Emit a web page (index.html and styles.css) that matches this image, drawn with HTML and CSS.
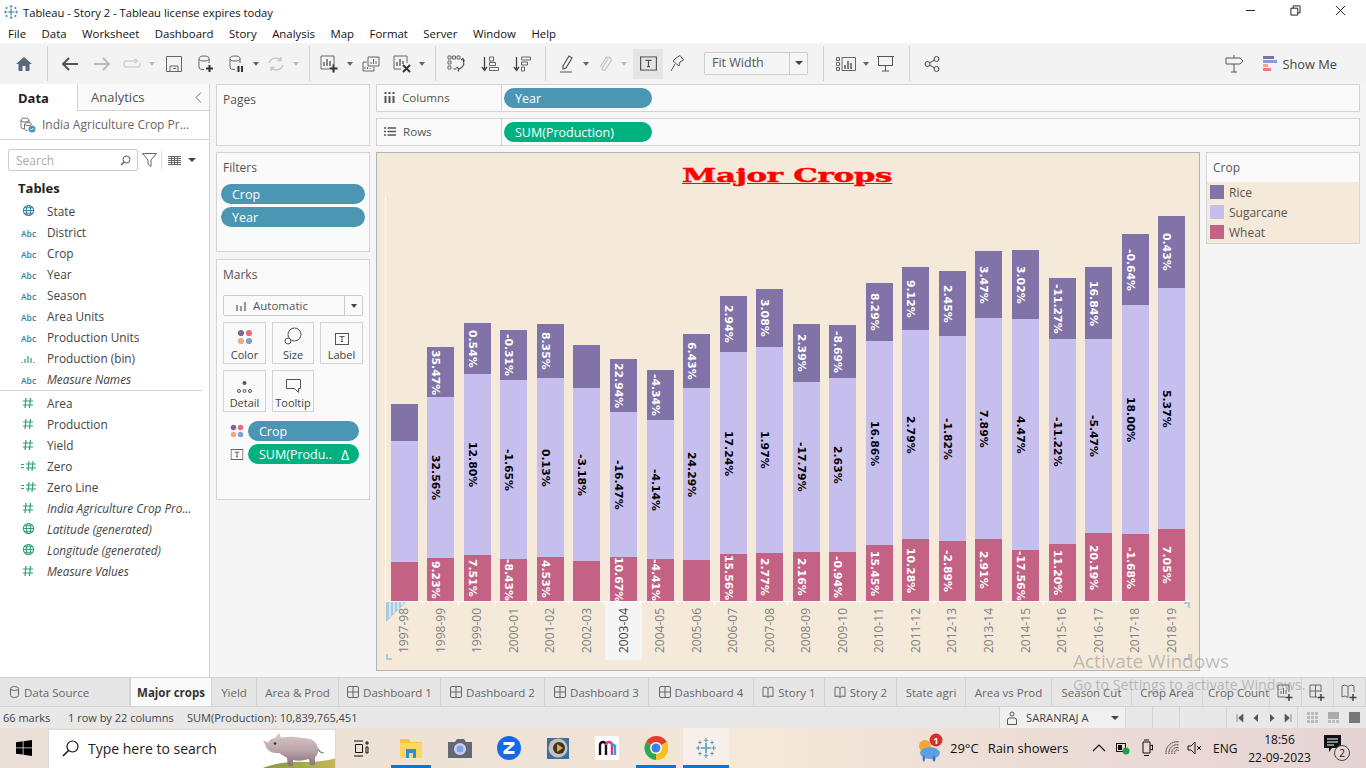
FILE: index.html
```html
<!DOCTYPE html>
<html lang="en">
<head>
<meta charset="utf-8">
<title>Tableau - Story 2</title>
<link rel="stylesheet" href="styles.css">
</head>
<body>
<svg class="defs" width="0" height="0">
  <defs>
    <symbol id="abc" viewBox="0 0 16 10"><text x="0" y="9" class="abc-t">Abc</text></symbol>
    <symbol id="hash" viewBox="0 0 12 12"><path d="M4 1 3 11M8.500 1l-1 10M1 4h10M1 8h10" fill="none" stroke="#2f9e77" stroke-width="1.200"/></symbol>
    <symbol id="eqhash" viewBox="0 0 16 12"><path d="M0 4.500h3M0 7.500h3M8 1 7 11M12 1l-1 10M5 4h10M5 8h10" fill="none" stroke="#2f9e77" stroke-width="1.100"/></symbol>
    <symbol id="globe" viewBox="0 0 14 14"><g fill="none" stroke-width="1.100"><circle cx="7" cy="7" r="5.500"/><ellipse cx="7" cy="7" rx="2.400" ry="5.500"/><path d="M1.500 7h11M2.400 4h9.200M2.400 10h9.200"/></g></symbol>
    <symbol id="dots" viewBox="0 0 16 16"><circle cx="4" cy="4" r="3.100" fill="#7e6796"/><circle cx="12" cy="4" r="3.100" fill="#ea6a7e"/><circle cx="4" cy="12" r="3.100" fill="#f2a77c"/><circle cx="12" cy="12" r="3.100" fill="#7ea3cc"/></symbol>
    <symbol id="tbox" viewBox="0 0 14 12"><rect x=".5" y=".5" width="13" height="11" fill="none" stroke="#555"/><path d="M4.500 3.500h5M7 3.500v5M5.800 8.500h2.400" fill="none" stroke="#555"/></symbol>
    <symbol id="dash" viewBox="0 0 12 12"><rect x=".5" y=".5" width="11" height="11" rx="1.500" fill="none" stroke="#666"/><path d="M6 .5v11M.5 6h11" stroke="#666"/></symbol>
    <symbol id="book" viewBox="0 0 12 12"><path d="M1 1.500 4 1l2 1.500L8 1l3 .5v9L8 10l-2 1.500L4 10l-3 .5zM6 2.500v9" fill="none" stroke="#666"/></symbol>
    <symbol id="tlogo" viewBox="0 0 20 20"><g fill="none"><path d="M10 5.500v9M5.500 10h9" stroke-width="1.500"/><path d="M10 1v4M8 3h4M10 15v4M8 17h4M1 10h4M3 8v4M15 10h4M17 8v4M4.500 3.500v3M3 5h3M15.500 3.500v3M14 5h3M4.500 13.500v3M3 15h3M15.500 13.500v3M14 15h3"/></g></symbol>
  </defs>
</svg>

<header class="titlebar">
  <svg class="app-icon" viewBox="0 0 20 20"><use href="#tlogo"/></svg>
  <span class="title-text">Tableau - Story 2 - Tableau license expires today</span>
  <div class="win-ctrls">
    <svg viewBox="0 0 12 12"><path d="M1 6h10" stroke="#111"/></svg>
    <svg viewBox="0 0 12 12"><path d="M1 3.500h7.500V11H1zM3.500 3.500V1H11v7.500H8.500" fill="none" stroke="#111"/></svg>
    <svg viewBox="0 0 12 12"><path d="m1 1 10 10M11 1 1 11" stroke="#111"/></svg>
  </div>
</header>

<nav class="menubar">
  <span>File</span><span>Data</span><span>Worksheet</span><span>Dashboard</span><span>Story</span><span>Analysis</span><span>Map</span><span>Format</span><span>Server</span><span>Window</span><span>Help</span>
</nav>

<div class="toolbar">
  <div class="tb w32"><svg width="18" height="16" viewBox="0 0 18 16"><path d="M9 1 1 8h2.500v7h4v-5h3v5h4V8H17z" fill="#566a7c"/></svg></div>
  <i class="sep"></i>
  <div class="tb w30"><svg width="18" height="14" viewBox="0 0 18 14"><path d="M17 7H2M8 1 2 7l6 6" fill="none" stroke="#555" stroke-width="2"/></svg></div>
  <div class="tb w34"><svg width="18" height="14" viewBox="0 0 18 14"><path d="M1 7h15M10 1l6 6-6 6" fill="none" stroke="#bbb" stroke-width="2"/></svg></div>
  <div class="tb w26"><svg width="18" height="12" viewBox="0 0 18 12"><path d="M12 3H3a2 2 0 0 0-2 2v2a2 2 0 0 0 2 2h12a2 2 0 0 0 2-2V5M12 1v4l3-2z" fill="none" stroke="#c4c4c4"/></svg></div>
  <div class="tb w14"><b class="caret off"></b></div>
  <div class="tb w30"><svg width="16" height="16" viewBox="0 0 16 16"><path d="M.5.500h15v15H.5zM4 15.500V10h8v5.500M7 12.500h3" fill="none" stroke="#666"/></svg></div>
  <div class="tb w34"><svg width="16" height="18" viewBox="0 0 16 18"><path d="M1 4v9q0 1.500 5 1.500M11 4v4" fill="none" stroke="#666"/><ellipse cx="6" cy="3.500" rx="5" ry="2.500" fill="none" stroke="#666"/><path d="M11.500 10v7M8 13.500h7" stroke="#333" stroke-width="2"/></svg></div>
  <div class="tb w28"><svg width="16" height="18" viewBox="0 0 16 18"><path d="M1 4v9q0 1.500 5 1.500M11 4v4" fill="none" stroke="#666"/><ellipse cx="6" cy="3.500" rx="5" ry="2.500" fill="none" stroke="#666"/><path d="M9.500 11v6M13 11v6" stroke="#333" stroke-width="2"/></svg></div>
  <div class="tb w10"><b class="caret"></b></div>
  <div class="tb w30"><svg width="18" height="16" viewBox="0 0 18 16"><path d="M2 7a7 6 0 0 1 12-3M16 9a7 6 0 0 1-12 3M14 1v3.500h-3.500M4 15v-3.500h3.500" fill="none" stroke="#c4c4c4" stroke-width="1.300"/></svg></div>
  <div class="tb w10"><b class="caret off"></b></div>
  <i class="sep s8"></i>
  <div class="tb w24"><svg width="18" height="18" viewBox="0 0 18 18"><path d="M14 10V1H1v13h8" fill="none" stroke="#666"/><path d="M4 11V7M7 11V4M10 11V6" stroke="#666" stroke-width="1.500"/><path d="M13.500 9.500v8M9.500 13.500h8" stroke="#333" stroke-width="2"/></svg></div>
  <div class="tb w18"><b class="caret"></b></div>
  <div class="tb w24"><svg width="18" height="16" viewBox="0 0 18 16"><path d="M6 10V1h11v9H6zM5 6H1v9h11v-4" fill="none" stroke="#666"/><path d="M9 8V6M11.500 8V3M14 8V5M3 13v-2M5.500 13v-2M8 13v-1" stroke="#666"/></svg></div>
  <div class="tb w34 nudge"><svg width="18" height="18" viewBox="0 0 18 18"><path d="M14 8V1H1v13h7" fill="none" stroke="#666"/><path d="M4 11V7M7 11V4M10 9V6" stroke="#666" stroke-width="1.500"/><path d="m10 10 7 7M17 10l-7 7" stroke="#333" stroke-width="2"/></svg></div>
  <div class="tb w10"><b class="caret"></b></div>
  <i class="sep s8"></i>
  <div class="tb w26"><svg width="19" height="17" viewBox="0 0 19 17"><path d="M1 1h3v3H1zM5.500 1h3v3h-3zM10 1h3v3h-3zM1 6h3v3H1zM1 11h3v3H1z" fill="none" stroke="#666"/><path d="M16 5c2 3 1 7-4 9M9.500 12l2.500 2-1 2.500M6.500 14h3M14 5l2-1.500 1.500 2.500" fill="none" stroke="#444" stroke-width="1.100"/></svg></div>
  <div class="tb w42"><svg width="18" height="16" viewBox="0 0 18 16"><path d="M3.500 1v13M1 11l2.500 3.500L6 11" fill="none" stroke="#444" stroke-width="1.300"/><path d="M8.500 1h4v4h-4zM8.500 6.500h6v3h-6zM8.500 11.500h9v3h-9z" fill="none" stroke="#666"/></svg></div>
  <div class="tb w22"><svg width="18" height="16" viewBox="0 0 18 16"><path d="M3.500 1v13M1 11l2.500 3.500L6 11" fill="none" stroke="#444" stroke-width="1.300"/><path d="M8.500 1h9v3h-9zM8.500 6h6v3h-6zM8.500 11h3v4h-3z" fill="none" stroke="#666"/></svg></div>
  <div class="tb-gap g5"></div>
  <i class="sep"></i>
  <div class="tb w28"><svg width="14" height="18" viewBox="0 0 14 18"><path d="M3 11 9 1l3 2-6 10-3 1zM0 17h12" fill="none" stroke="#555" stroke-width="1.200"/></svg></div>
  <div class="tb w10"><b class="caret"></b></div>
  <div class="tb w28"><svg width="14" height="18" viewBox="0 0 14 18"><path d="M10 4 4 13a2 2 0 0 0 3 2l6-9a3 3 0 0 0-5-3L2 12" fill="none" stroke="#c4c4c4" stroke-width="1.200"/></svg></div>
  <div class="tb w10"><b class="caret off"></b></div>
  <div class="tb-gap g4"></div>
  <div class="tb w30 tb-on"><svg width="17" height="15" viewBox="0 0 14 12"><use href="#tbox"/></svg></div>
  <div class="tb w28"><svg width="14" height="17" viewBox="0 0 14 17"><path d="M6 3 10 .5 13.500 5 10 7l-1 4-6-5zM5 9l-4 7" fill="none" stroke="#555"/></svg></div>
  <div class="tb-gap g13"></div>
  <div class="fit"><span class="fit-text">Fit Width</span><span class="fit-btn"><b class="caret"></b></span></div>
  <div class="tb-gap g8"></div>
  <i class="sep"></i>
  <div class="tb w30"><svg width="20" height="14" viewBox="0 0 20 14"><path d="M.5.500h3v3h-3zM.5 5.500h3v3h-3zM.5 10.500h3v3h-3zM6 .5h13.500v13H6z" fill="none" stroke="#666"/><path d="M9 12V8M12 12V4M15 12V6" stroke="#555" stroke-width="1.500"/></svg></div>
  <div class="tb w10"><b class="caret"></b></div>
  <div class="tb w28"><svg width="17" height="17" viewBox="0 0 17 17"><path d="M0 1.500h17M1.500 1.500v9h14v-9M8.500 10.500V16M5 16h7" fill="none" stroke="#555"/></svg></div>
  <div class="tb-gap g3"></div>
  <i class="sep"></i>
  <div class="tb w30"><svg width="16" height="16" viewBox="0 0 16 16"><g fill="none" stroke="#444"><circle cx="3.500" cy="8" r="2.500"/><circle cx="12.500" cy="3" r="2.500"/><circle cx="12.500" cy="13" r="2.500"/><path d="m5.700 6.800 4.600-2.600M5.700 9.200l4.600 2.600"/></g></svg></div>
  <div class="tb-right">
    <svg width="19" height="18" viewBox="0 0 19 18"><path d="M1 3h14l3 3-3 3H1zM9 0v3M9 9v8M6 17h6" fill="none" stroke="#555"/></svg>
    <span class="showme">
      <svg width="14" height="15" viewBox="0 0 14 15"><path fill="#84719f" d="M0 0h11v3H0z"/><path fill="#7ea3cc" d="M0 4h14v3H0z"/><path fill="#f2a77c" d="M0 8h5v3H0z"/><path fill="#ee7a86" d="M0 12h8v3H0z"/></svg>
      Show Me
    </span>
  </div>
</div>

<main class="workspace">
  <aside class="datapane">
    <div class="pane-tabs">
      <div class="pane-tab active">Data</div>
      <div class="pane-tab">Analytics<svg class="collapse" width="7" height="11" viewBox="0 0 7 11"><path d="M6 .5 1 5.500l5 5" fill="none" stroke="#666"/></svg></div>
    </div>
    <div class="source">
      <svg width="16" height="16" viewBox="0 0 16 16"><g fill="none" stroke="#777"><ellipse cx="5" cy="3" rx="4" ry="2"/><path d="M1 3v7q0 2 4 2M9 3v2"/><ellipse cx="8" cy="7" rx="3.500" ry="1.500"/><path d="M4.500 7v5q1 1.500 3 1.500"/></g><circle cx="12" cy="12" r="3.500" fill="#4b94b4"/><path d="m10.500 12 1 1 2-2" stroke="#fff" fill="none"/></svg>
      <span>India Agriculture Crop Pr...</span>
    </div>
    <div class="search-row">
      <div class="search"><span>Search</span><svg width="11" height="11" viewBox="0 0 11 11"><circle cx="6.500" cy="4.500" r="3.500" fill="none" stroke="#555"/><path d="M4 7 1 10" stroke="#555" stroke-width="1.300"/></svg></div>
      <svg class="funnel" width="15" height="14" viewBox="0 0 15 14"><path d="M.5.500h14L9 7v6.500L6 11V7z" fill="none" stroke="#666"/></svg>
      <i class="mini-sep"></i>
      <svg width="13" height="9" viewBox="0 0 13 9"><path d="M0 .5h13M0 2.500h13M0 4.500h13M0 6.500h13M0 8.500h13M3.500 0v9M6.500 0v9M9.500 0v9" stroke="#666"/></svg>
      <b class="caret dark"></b>
    </div>
    <h2 class="tables">Tables</h2>
    <ul class="fields">
      <li><svg class="fi globe-i" viewBox="0 0 14 14"><use href="#globe"/></svg>State</li>
      <li><svg class="fi abc-i" viewBox="0 0 16 10"><use href="#abc"/></svg>District</li>
      <li><svg class="fi abc-i" viewBox="0 0 16 10"><use href="#abc"/></svg>Crop</li>
      <li><svg class="fi abc-i" viewBox="0 0 16 10"><use href="#abc"/></svg>Year</li>
      <li><svg class="fi abc-i" viewBox="0 0 16 10"><use href="#abc"/></svg>Season</li>
      <li><svg class="fi abc-i" viewBox="0 0 16 10"><use href="#abc"/></svg>Area Units</li>
      <li><svg class="fi abc-i" viewBox="0 0 16 10"><use href="#abc"/></svg>Production Units</li>
      <li><svg class="fi abc-i" viewBox="0 0 16 10"><path d="M1 9V8M4 9V5M7 9V2M10 9V4M13 9V8" stroke="#2f9e77" stroke-width="1.200"/></svg>Production (bin)</li>
      <li class="em"><svg class="fi abc-i" viewBox="0 0 16 10"><use href="#abc"/></svg>Measure Names</li>
    </ul>
    <ul class="fields measures">
      <li><svg class="fi hash-i" viewBox="0 0 12 12"><use href="#hash"/></svg>Area</li>
      <li><svg class="fi hash-i" viewBox="0 0 12 12"><use href="#hash"/></svg>Production</li>
      <li><svg class="fi hash-i" viewBox="0 0 12 12"><use href="#hash"/></svg>Yield</li>
      <li><svg class="fi eq-i" viewBox="0 0 16 12"><use href="#eqhash"/></svg>Zero</li>
      <li><svg class="fi eq-i" viewBox="0 0 16 12"><use href="#eqhash"/></svg>Zero Line</li>
      <li class="em"><svg class="fi hash-i" viewBox="0 0 12 12"><use href="#hash"/></svg>India Agriculture Crop Pro...</li>
      <li class="em"><svg class="fi globe-g" viewBox="0 0 14 14"><use href="#globe"/></svg>Latitude (generated)</li>
      <li class="em"><svg class="fi globe-g" viewBox="0 0 14 14"><use href="#globe"/></svg>Longitude (generated)</li>
      <li class="em"><svg class="fi hash-i" viewBox="0 0 12 12"><use href="#hash"/></svg>Measure Values</li>
    </ul>
  </aside>

  <section class="cards">
    <div class="card pages"><h3>Pages</h3></div>
    <div class="card filters">
      <h3>Filters</h3>
      <div class="pill blue wide">Crop</div>
      <div class="pill blue wide">Year</div>
    </div>
    <div class="card marks">
      <h3>Marks</h3>
      <div class="mark-type">
        <svg width="11" height="10" viewBox="0 0 11 10"><path d="M1 10V4M5 10V5M9 10V1" stroke="#999" stroke-width="2.200"/></svg>
        <span>Automatic</span>
        <span class="mt-btn"><b class="caret"></b></span>
      </div>
      <div class="mark-grid">
        <div class="mbtn"><svg width="16" height="16" viewBox="0 0 16 16"><use href="#dots"/></svg>Color</div>
        <div class="mbtn"><svg width="18" height="18" viewBox="0 0 18 18"><g fill="none" stroke="#555"><circle cx="10.500" cy="7.500" r="6.500"/><circle cx="4" cy="14" r="3" fill="#fafafa"/></g></svg>Size</div>
        <div class="mbtn"><svg width="14" height="12" viewBox="0 0 14 12"><use href="#tbox"/></svg>Label</div>
        <div class="mbtn"><svg width="15" height="12" viewBox="0 0 15 12"><circle cx="7.500" cy="2" r="2" fill="#555"/><g fill="none" stroke="#555"><circle cx="2" cy="10" r="1.500"/><circle cx="7.500" cy="10" r="1.500"/><circle cx="13" cy="10" r="1.500"/></g></svg>Detail</div>
        <div class="mbtn"><svg width="15" height="14" viewBox="0 0 15 14"><path d="M.5.500h14v9h-2v4l-4-4h-8z" fill="none" stroke="#555"/></svg>Tooltip</div>
      </div>
      <div class="mark-field"><svg width="14" height="14" viewBox="0 0 16 16"><use href="#dots"/></svg><div class="pill blue">Crop</div></div>
      <div class="mark-field"><svg width="13" height="11" viewBox="0 0 14 12"><use href="#tbox"/></svg><div class="pill green delta">SUM(Produ..<span>Δ</span></div></div>
    </div>
  </section>

  <section class="viewarea">
    <div class="shelf">
      <div class="shelf-name"><svg width="11" height="11" viewBox="0 0 11 11"><path d="M1.500 4v7M5.500 4v7M9.500 4v7M1.500 0v2M5.500 0v2M9.500 0v2" stroke="#555" stroke-width="2"/></svg>Columns</div>
      <div class="pill blue shelf-pill">Year</div>
    </div>
    <div class="shelf">
      <div class="shelf-name"><svg width="12" height="9" viewBox="0 0 12 9"><path d="M0 1h2M3.500 1H12M0 4.500h2M3.500 4.500H12M0 8h2M3.500 8H12" stroke="#555" stroke-width="1.500"/></svg>Rows</div>
      <div class="pill green shelf-pill">SUM(Production)</div>
    </div>
    <div class="canvas">
      <div class="chart">
        <div class="chart-title"><span>Major Crops</span></div>
        <div class="plot">
          <div class="bar"><div class="seg rice" style="height:37px"></div><div class="seg sugar" style="height:121px"></div><div class="seg wheat" style="height:39px"></div></div>
          <div class="bar"><div class="seg rice" style="height:50px"><span>35.47%</span></div><div class="seg sugar" style="height:161px"><span>32.56%</span></div><div class="seg wheat" style="height:43px"><span>9.23%</span></div></div>
          <div class="bar"><div class="seg rice" style="height:51px"><span>0.54%</span></div><div class="seg sugar" style="height:181px"><span>12.80%</span></div><div class="seg wheat" style="height:46px"><span>7.51%</span></div></div>
          <div class="bar"><div class="seg rice" style="height:50px"><span>-0.31%</span></div><div class="seg sugar" style="height:179px"><span>-1.65%</span></div><div class="seg wheat" style="height:42px"><span>-8.43%</span></div></div>
          <div class="bar"><div class="seg rice" style="height:54px"><span>8.35%</span></div><div class="seg sugar" style="height:179px"><span>0.13%</span></div><div class="seg wheat" style="height:44px"><span>4.53%</span></div></div>
          <div class="bar"><div class="seg rice" style="height:43px"></div><div class="seg sugar" style="height:173px"><span>-3.18%</span></div><div class="seg wheat" style="height:40px"></div></div>
          <div class="bar"><div class="seg rice" style="height:53px"><span>22.94%</span></div><div class="seg sugar" style="height:145px"><span>-16.47%</span></div><div class="seg wheat" style="height:44px"><span>10.67%</span></div></div>
          <div class="bar"><div class="seg rice" style="height:50px"><span>-4.34%</span></div><div class="seg sugar" style="height:139px"><span>-4.14%</span></div><div class="seg wheat" style="height:42px"><span>-4.41%</span></div></div>
          <div class="bar"><div class="seg rice" style="height:54px"><span>6.43%</span></div><div class="seg sugar" style="height:172px"><span>24.29%</span></div><div class="seg wheat" style="height:41px"></div></div>
          <div class="bar"><div class="seg rice" style="height:56px"><span>2.94%</span></div><div class="seg sugar" style="height:202px"><span>17.24%</span></div><div class="seg wheat" style="height:47px"><span>15.56%</span></div></div>
          <div class="bar"><div class="seg rice" style="height:58px"><span>3.08%</span></div><div class="seg sugar" style="height:206px"><span>1.97%</span></div><div class="seg wheat" style="height:48px"><span>2.77%</span></div></div>
          <div class="bar"><div class="seg rice" style="height:58px"><span>2.39%</span></div><div class="seg sugar" style="height:170px"><span>-17.79%</span></div><div class="seg wheat" style="height:49px"><span>2.16%</span></div></div>
          <div class="bar"><div class="seg rice" style="height:53px"><span>-8.69%</span></div><div class="seg sugar" style="height:174px"><span>2.63%</span></div><div class="seg wheat" style="height:49px"><span>-0.94%</span></div></div>
          <div class="bar"><div class="seg rice" style="height:58px"><span>8.29%</span></div><div class="seg sugar" style="height:204px"><span>16.86%</span></div><div class="seg wheat" style="height:56px"><span>15.45%</span></div></div>
          <div class="bar"><div class="seg rice" style="height:63px"><span>9.12%</span></div><div class="seg sugar" style="height:209px"><span>2.79%</span></div><div class="seg wheat" style="height:62px"><span>10.28%</span></div></div>
          <div class="bar"><div class="seg rice" style="height:65px"><span>2.45%</span></div><div class="seg sugar" style="height:205px"><span>-1.82%</span></div><div class="seg wheat" style="height:60px"><span>-2.89%</span></div></div>
          <div class="bar"><div class="seg rice" style="height:67px"><span>3.47%</span></div><div class="seg sugar" style="height:221px"><span>7.89%</span></div><div class="seg wheat" style="height:62px"><span>2.91%</span></div></div>
          <div class="bar"><div class="seg rice" style="height:69px"><span>3.02%</span></div><div class="seg sugar" style="height:231px"><span>4.47%</span></div><div class="seg wheat" style="height:51px"><span>-17.56%</span></div></div>
          <div class="bar"><div class="seg rice" style="height:61px"><span>-11.27%</span></div><div class="seg sugar" style="height:205px"><span>-11.22%</span></div><div class="seg wheat" style="height:57px"><span>11.20%</span></div></div>
          <div class="bar"><div class="seg rice" style="height:72px"><span>16.84%</span></div><div class="seg sugar" style="height:194px"><span>-5.47%</span></div><div class="seg wheat" style="height:68px"><span>20.19%</span></div></div>
          <div class="bar"><div class="seg rice" style="height:71px"><span>-0.64%</span></div><div class="seg sugar" style="height:229px"><span>18.00%</span></div><div class="seg wheat" style="height:67px"><span>-1.68%</span></div></div>
          <div class="bar"><div class="seg rice" style="height:72px"><span>0.43%</span></div><div class="seg sugar" style="height:241px"><span>5.37%</span></div><div class="seg wheat" style="height:72px"><span>7.05%</span></div></div>
        </div>
        <div class="axis">
          <div class="tick"><span>1997-98</span></div><div class="tick"><span>1998-99</span></div><div class="tick"><span>1999-00</span></div><div class="tick"><span>2000-01</span></div><div class="tick"><span>2001-02</span></div><div class="tick"><span>2002-03</span></div><div class="tick hot"><span>2003-04</span></div><div class="tick"><span>2004-05</span></div><div class="tick"><span>2005-06</span></div><div class="tick"><span>2006-07</span></div><div class="tick"><span>2007-08</span></div><div class="tick"><span>2008-09</span></div><div class="tick"><span>2009-10</span></div><div class="tick"><span>2010-11</span></div><div class="tick"><span>2011-12</span></div><div class="tick"><span>2012-13</span></div><div class="tick"><span>2013-14</span></div><div class="tick"><span>2014-15</span></div><div class="tick"><span>2015-16</span></div><div class="tick"><span>2016-17</span></div><div class="tick"><span>2017-18</span></div><div class="tick"><span>2018-19</span></div>
          <svg class="hatch" width="20" height="20" viewBox="0 0 20 20"><path d="M0 0h20L0 20z" fill="#a9cbe2"/><path d="M4 0v15M8 0v11M12 0v7M16 0v3" stroke="#fff"/></svg>
          <i class="corner c-bl"></i><i class="corner c-tr"></i><i class="corner c-br"></i>
        </div>
      </div>
      <div class="legend">
        <div class="legend-head">Crop</div>
        <div class="legend-body">
          <div class="lg-row"><i class="sw rice"></i>Rice</div>
          <div class="lg-row"><i class="sw sugar"></i>Sugarcane</div>
          <div class="lg-row"><i class="sw wheat"></i>Wheat</div>
        </div>
      </div>
    </div>
  </section>
</main>

<div class="tabs">
  <div class="tab first"><svg width="9" height="12" viewBox="0 0 9 12"><path d="M.5 2.500v7q0 2 4 2t4-2v-7M.5 2.500q0-2 4-2t4 2-4 2-4-2z" fill="none" stroke="#666"/></svg>Data Source</div>
  <div class="tab active">Major crops</div>
  <div class="tab">Yield</div>
  <div class="tab">Area &amp; Prod</div>
  <div class="tab"><svg width="12" height="12" viewBox="0 0 12 12"><use href="#dash"/></svg>Dashboard 1</div>
  <div class="tab"><svg width="12" height="12" viewBox="0 0 12 12"><use href="#dash"/></svg>Dashboard 2</div>
  <div class="tab"><svg width="12" height="12" viewBox="0 0 12 12"><use href="#dash"/></svg>Dashboard 3</div>
  <div class="tab"><svg width="12" height="12" viewBox="0 0 12 12"><use href="#dash"/></svg>Dashboard 4</div>
  <div class="tab"><svg width="12" height="12" viewBox="0 0 12 12"><use href="#book"/></svg>Story 1</div>
  <div class="tab"><svg width="12" height="12" viewBox="0 0 12 12"><use href="#book"/></svg>Story 2</div>
  <div class="tab">State agri</div>
  <div class="tab">Area vs Prod</div>
  <div class="tab">Season Cut</div>
  <div class="tab">Crop Area</div>
  <div class="tab clip">Crop Count</div>
  <div class="tab add"><svg width="17" height="17" viewBox="0 0 17 17"><path d="M12 8V1H1v12h7M4 10V7M6.500 10V4M9 10V6" fill="none" stroke="#666"/><path d="M12 10v7M8.500 13.500h7" stroke="#444" stroke-width="1.500"/></svg></div>
  <div class="tab add"><svg width="17" height="17" viewBox="0 0 17 17"><path d="M12 8V1H1v12h7M6.500 1v12M1 7h11" fill="none" stroke="#666"/><path d="M12 10v7M8.500 13.500h7" stroke="#444" stroke-width="1.500"/></svg></div>
  <div class="tab add"><svg width="17" height="17" viewBox="0 0 17 17"><path d="M1 2 4 1l3 1.500L10 1l3 1v6M1 2v11l3-1 3 1.500M7 2.500v11" fill="none" stroke="#666"/><path d="M12 10v7M8.500 13.500h7" stroke="#444" stroke-width="1.500"/></svg></div>
</div>

<div class="status">
  <span class="st1">66 marks</span><span class="st2">1 row by 22 columns</span><span>SUM(Production): 10,839,765,451</span>
  <div class="st-right">
    <div class="st-user">
      <svg width="10" height="14" viewBox="0 0 10 14"><circle cx="5" cy="3" r="2" fill="none" stroke="#555"/><path d="M.5 13.500V9q0-2 2-2h5q2 0 2 2v4.500z" fill="none" stroke="#555"/></svg>
      <span>SARANRAJ A</span><b class="caret dark"></b>
    </div>
    <i class="st-cell"></i><i class="st-cell"></i><i class="st-cell st-wide"></i>
    <div class="st-nav">
      <svg width="8" height="8" viewBox="0 0 8 8"><path d="M1 0v8M7 0v8L2.500 4z" fill="#555" stroke="#555" stroke-width=".6"/></svg>
      <svg width="8" height="8" viewBox="0 0 8 8"><path d="M6 0v8L1.500 4z" fill="#555"/></svg>
      <svg width="8" height="8" viewBox="0 0 8 8"><path d="M2 0v8l4.500-4z" fill="#555"/></svg>
      <svg width="8" height="8" viewBox="0 0 8 8"><path d="M7 0v8M1 0v8l4.500-4z" fill="#555" stroke="#555" stroke-width=".6"/></svg>
    </div>
    <div class="st-view">
      <svg width="11" height="11" viewBox="0 0 11 11"><path d="M0 0h3v3H0zM4 0h3v3H4zM8 0h3v3H8zM0 4h3v3H0zM4 4h3v3H4zM8 4h3v3H8zM0 8h3v3H0zM4 8h3v3H4zM8 8h3v3H8z" fill="#bbb"/></svg>
      <svg width="11" height="11" viewBox="0 0 11 11"><path d="M0 0h11v7H0z" fill="#aaa"/><path d="M0 8h3v3H0zM4 8h3v3H4zM8 8h3v3H8z" fill="#bbb"/></svg>
      <svg width="11" height="11" viewBox="0 0 11 11"><path d="M0 0h11v11H0z" fill="#777"/></svg>
    </div>
  </div>
</div>

<footer class="taskbar">
  <svg class="winlogo" width="16" height="16" viewBox="0 0 16 16"><path d="M0 2.300 6.700 1.300v6.200H0zM7.500 1.200 16 0v7.500H7.500zM0 8.300h6.700v6.300L0 13.700zM7.500 8.300H16V16l-8.500-1.200z" fill="#000"/></svg>
  <div class="tsearch">
    <svg width="17" height="17" viewBox="0 0 17 17"><circle cx="10.500" cy="6.500" r="5.500" fill="none" stroke="#111" stroke-width="1.200"/><path d="M6.500 10.500 1 16" stroke="#111" stroke-width="1.400"/></svg>
    <span>Type here to search</span>
    <svg class="rhino" width="85" height="40" viewBox="0 0 85 40">
      <defs>
        <linearGradient id="rh" x1="0" y1="0" x2="0" y2="1"><stop offset="0" stop-color="#dcc8c6"/><stop offset=".55" stop-color="#b9a3a8"/><stop offset="1" stop-color="#85707a"/></linearGradient>
        <linearGradient id="hill" x1="0" y1="0" x2="1" y2="0"><stop offset="0" stop-color="#7e9c3e"/><stop offset=".6" stop-color="#a5ae4c"/><stop offset="1" stop-color="#c9b45c"/></linearGradient>
      </defs>
      <path d="M5 40Q28 31 52 33 68 33 82 29V40z" fill="url(#hill)"/>
      <path d="M8 11 13 13.500 16 10 20 9 24 4 26 8.500Q38 7 47 9 62 9 63 20 63.500 26 60 28V36H55L54 30Q45 33 38 31V37H33L32 29 24 24Q18 24 16 23L12 20z" fill="url(#rh)"/>
      <path d="M63 20Q65 24 69 24" fill="none" stroke="#85707a" stroke-width="1.200"/>
      <circle cx="20" cy="14.500" r="1.200" fill="#2b2b2b"/>
    </svg>
  </div>
  <svg class="ti taskview" width="16" height="17" viewBox="0 0 16 17"><path d="M1 1h9M1 16h9M2.500 4.500h7v8h-7zM13 2h2v2h-2zM13 7h2v6h-2z" fill="none" stroke="#111"/></svg>
  <div class="ticon run"><svg width="22" height="20" viewBox="0 0 22 20"><path d="M0 1h9l2 3h11v16H0z" fill="#f6c445"/><path d="M0 5h22v15H0z" fill="#fbd863"/><path d="M6 11h10v9H6z" fill="#2e8fd8"/><path d="M9 15h4v5H9z" fill="#fbd863"/></svg></div>
  <div class="ticon"><svg width="24" height="20" viewBox="0 0 24 20"><path d="M0 4h7l2-3h7l2 3h6v16H0z" fill="#5f6a73"/><circle cx="12" cy="11" r="6" fill="#d8c6ee"/><circle cx="12" cy="11" r="3.500" fill="#7da5e8"/></svg></div>
  <div class="ticon"><svg width="24" height="24" viewBox="0 0 24 24"><circle cx="12" cy="12" r="12" fill="#1768e4"/><path d="M6.500 6h11v3l-7 6h7v3h-11v-3l7-6h-7z" fill="#fff"/></svg></div>
  <div class="ticon"><svg width="24" height="26" viewBox="0 0 24 26"><rect x="1" y="3" width="22" height="21" fill="#3a6ea5"/><circle cx="12" cy="13" r="9.500" fill="#c9c1b4"/><circle cx="13" cy="13" r="6" fill="#3d3328"/><path d="M11 9l6 4-6 4z" fill="#e9a93a"/></svg></div>
  <div class="ticon"><svg width="24" height="24" viewBox="0 0 24 24"><rect width="24" height="24" fill="#fff"/><path d="M5 19V9a3 3 0 0 1 6 0v10" fill="none" stroke="#111" stroke-width="2.400"/><path d="M11 9a3 3 0 0 1 6 0v10" fill="none" stroke="#e0338a" stroke-width="2.400"/><path d="M17 9a2 2 0 0 1 3 1v9" fill="none" stroke="#2aa7d9" stroke-width="2.400"/></svg></div>
  <div class="ticon run"><svg width="24" height="24" viewBox="0 0 24 24"><path d="M12 12 2 6a12 12 0 0 1 20.800 0z" fill="#e33b2e"/><path d="M12 12 22.800 6A12 12 0 0 1 12 24z" fill="#f7c11c"/><path d="M12 12 12 24A12 12 0 0 1 2 6z" fill="#2fa84f"/><circle cx="12" cy="12" r="6" fill="#fff"/><circle cx="12" cy="12" r="4.500" fill="#3b82e8"/></svg></div>
  <div class="ticon act"><svg class="tlogo-big" width="22" height="22" viewBox="0 0 20 20"><use href="#tlogo"/></svg></div>
  <div class="tray">
    <span class="weather">
      <svg width="25" height="30" viewBox="0 0 25 30"><circle cx="7" cy="13" r="6" fill="#f4a52c"/><ellipse cx="12" cy="20" rx="10" ry="6" fill="#5f9fe0"/><path d="M6 22q2 4 0 7-3-3 0-7zM16 22q3 4 0 7-3-3 0-7z" fill="#2f78c9"/><circle cx="18" cy="7" r="6.500" fill="#d3322b"/><text x="18" y="10.500" class="badge1">1</text></svg>
      <span class="temp">29°C</span><span>Rain showers</span>
    </span>
    <svg class="chev" width="14" height="8" viewBox="0 0 14 8"><path d="m1 7 6-6 6 6" fill="none" stroke="#111" stroke-width="1.200"/></svg>
    <svg width="14" height="14" viewBox="0 0 14 14"><rect x=".5" y="2.500" width="9" height="8" fill="none" stroke="#111"/><rect x="2" y="4" width="4" height="5" fill="#111"/><circle cx="10" cy="10" r="3.500" fill="#1e9e4a"/></svg>
    <svg width="11" height="18" viewBox="0 0 11 18"><path d="M1 3h7v11H1zM8 7l2.500-1v5L8 10M2 1h5M2 16.500h5" fill="none" stroke="#111"/></svg>
    <svg class="wifi" width="15" height="14" viewBox="0 0 15 14"><path d="M1 13a11 11 0 0 1 13-12M4 13a8 8 0 0 1 10-9M7 13a5 5 0 0 1 7-6M10 13a2.500 2.500 0 0 1 4-3" fill="none" stroke="#222" stroke-dasharray="1.500 .7"/></svg>
    <svg class="vol" width="15" height="14" viewBox="0 0 15 14"><path d="M1 5h3l4-4v12l-4-4H1zM10 5l4 4M14 5l-4 4" fill="none" stroke="#111"/></svg>
    <span class="lang">ENG</span>
    <span class="clock"><span>18:56</span><span>22-09-2023</span></span>
    <span class="notif">
      <svg width="17" height="17" viewBox="0 0 17 17"><path d="M0 0h17v13H8l-3 4v-4H0z" fill="#111"/><path d="M3 4h11M3 7h11M3 10h7" stroke="#fff"/></svg>
      <span class="nbadge">2</span>
    </span>
  </div>
</footer>

<div class="activate">
  <div class="a1">Activate Windows</div>
  <div class="a2">Go to Settings to activate Windows.</div>
</div>
</body>
</html>
```

FILE: styles.css
```css
* { box-sizing: border-box; }
html, body { margin: 0; padding: 0; }
body {
  width: 1366px; height: 768px; overflow: hidden; position: relative;
  font-family: "Open Sans", "Noto Sans", "Liberation Sans", sans-serif;
  font-size: 12px; color: #444; background: #f5f5f5;
  display: flex; flex-direction: column;
}
.defs { position: absolute; }
.abc-t { font: 600 8.500px "Open Sans", sans-serif; fill: #2f7f9f; }
ul { list-style: none; margin: 0; padding: 0; }
h2, h3 { margin: 0; font-weight: 400; }

/* title + menu */
.titlebar { height: 24px; background: #fff; display: flex; align-items: center; padding-left: 3px; flex: none; }
.app-icon { width: 16px; height: 16px; stroke: #3c7fa3; }
.title-text { margin-left: 4px; color: #111; font-size: 11.200px; }
.win-ctrls { margin-left: auto; display: flex; height: 20px; align-self: flex-start; align-items: center; padding-right: 20px; gap: 34px; }
.win-ctrls svg { width: 11px; height: 11px; }
.menubar { height: 19px; background: #fff; display: flex; align-items: center; gap: 15.500px; padding-left: 8px; color: #111; font-size: 11.400px; flex: none; }

/* toolbar */
.toolbar { height: 41px; background: #f3f3f3; display: flex; align-items: center; padding-left: 8px; flex: none; }
.tb { height: 30px; display: flex; align-items: center; justify-content: center; flex: none; }
.w10 { width: 10px; } .w14 { width: 14px; } .w18 { width: 18px; } .w22 { width: 22px; } .w24 { width: 24px; }
.w26 { width: 26px; } .w28 { width: 28px; } .w30 { width: 30px; } .w32 { width: 32px; } .w34 { width: 34px; } .w42 { width: 42px; }
.nudge { padding-left: 4px; }
.tb-on { background: #e5e5e5; }
.tb-gap { flex: none; height: 1px; }
.g3 { width: 3px; } .g4 { width: 4px; } .g5 { width: 5px; } .g8 { width: 8px; } .g13 { width: 13px; }
.sep { width: 1px; height: 35px; background: #d2d2d2; margin: 0 7px; flex: none; }
.s8 { margin-left: 8px; }
.caret { display: inline-block; width: 0; height: 0; border: 3.500px solid transparent; border-top: 4px solid #666; border-bottom: 0; }
.caret.off { border-top-color: #bdbdbd; }
.caret.dark { border-top-color: #444; border-left-width: 4px; border-right-width: 4px; }
.fit { width: 104px; height: 23px; border: 1px solid #ccc; border-radius: 2px; display: flex; align-items: center; background: #f5f5f5; flex: none; font-size: 12.500px; color: #555; margin-top: -1px; }
.fit-text { padding-left: 7px; flex: 1; padding-bottom: 1px; }
.fit-btn { width: 18px; height: 21px; border-left: 1px solid #ccc; display: flex; align-items: center; justify-content: center; }
.fit-btn .caret { border-top-color: #444; border-left-width: 4px; border-right-width: 4px; }
.tb-right { margin-left: auto; display: flex; align-items: center; padding-right: 29px; }
.showme { display: flex; align-items: center; gap: 6px; margin-left: 19px; font-size: 12.800px; color: #444; }

/* workspace */
.workspace { flex: none; height: 593px; display: flex; background: #f5f5f5; }
.datapane { width: 210px; background: #fff; border-right: 1px solid #d4d4d4; flex: none; }
.pane-tabs { display: flex; height: 27px; }
.pane-tab { display: flex; align-items: center; background: #fafafa; border-bottom: 1px solid #d4d4d4; border-left: 1px solid #d4d4d4; flex: 1; padding-left: 13px; font-size: 13px; color: #555; position: relative; }
.pane-tab.active { flex: none; width: 77px; background: #fff; border: 0; padding-left: 18px; font-weight: 700; color: #222; font-size: 13px; }
.collapse { margin-left: auto; margin-right: 7px; flex: none; }
.source { height: 29px; display: flex; align-items: center; gap: 6px; padding: 0 0 1px 20px; border-bottom: 1px solid #d4d4d4; color: #666; font-size: 12px; }
.search-row { display: flex; align-items: center; height: 22px; margin: 9px 0 0 8px; }
.search { width: 130px; height: 22px; border: 1px solid #ccc; border-radius: 2px; display: flex; align-items: center; justify-content: space-between; padding: 0 6px 0 7px; color: #aaa; font-size: 12px; }
.funnel { margin-left: 4px; }
.mini-sep { width: 1px; height: 18px; background: #ddd; margin: 0 6px 0 4px; }
.search-row .caret { margin-left: 7px; }
.tables { font-size: 13px; font-weight: 700; color: #222; margin: 6px 0 1px 18px; line-height: 22px; }
.fields li { height: 21px; display: flex; align-items: center; color: #444; font-size: 11.800px; white-space: nowrap; }
.fields li.em { font-style: italic; }
.fi { flex: none; }
.abc-i { width: 16px; height: 10px; margin: 2px 10px 0 21px; }
.hash-i { width: 12px; height: 12px; margin: 0 13px 0 22px; }
.eq-i { width: 16px; height: 12px; margin: 0 10px 0 21px; }
.globe-i, .globe-g { width: 13px; height: 13px; margin: 0 12px 0 22px; }
.globe-i { stroke: #2f7f9f; }
.globe-g { stroke: #2f9e77; }
.measures { border-top: 1px solid #d4d4d4; margin: 1px 7px 0 0; padding-top: 1px; }

/* cards */
.cards { width: 154px; margin: 0 6px; flex: none; display: flex; flex-direction: column; gap: 6px; }
.card { background: #fafafa; border: 1px solid #d4d4d4; padding: 0 4px; }
.card h3 { font-size: 12px; color: #555; padding: 6px 2px 0 2px; height: 31px; }
.pages { height: 62px; }
.filters { height: 100px; margin-bottom: 1px; }
.marks { height: 241px; }
.marks h3 { height: 35px; }
.pill { height: 20px; border-radius: 10px; color: #fff; font-size: 12.500px; display: flex; align-items: center; padding-left: 11px; white-space: nowrap; }
.blue { background: #4b96b3; }
.green { background: #00b180; }
.wide { margin-bottom: 3px; }
.mark-type { height: 21px; margin: 0 2px; border: 1px solid #ccc; border-radius: 2px; display: flex; align-items: center; padding-left: 12px; gap: 6px; color: #555; font-size: 11.500px; }
.mt-btn { margin-left: auto; width: 18px; height: 19px; border-left: 1px solid #ccc; display: flex; align-items: center; justify-content: center; }
.mt-btn .caret { border-top-color: #444; }
.mark-grid { display: grid; grid-template-columns: 43px 42px 43px; gap: 6px 6px; margin: 6px 2px 0; }
.mbtn { height: 42px; border: 1px solid #d4d4d4; display: flex; flex-direction: column; align-items: center; justify-content: flex-end; gap: 3px; padding-bottom: 1px; font-size: 11px; color: #444; line-height: 14px; }
.mark-field { display: flex; align-items: center; height: 20px; margin: 3px 6px 0 9px; gap: 4px; }
.mark-grid + .mark-field { margin-top: 9px; }
.mark-field svg { flex: none; width: 14px; }
.mark-field .pill { flex: 1; }
.delta { justify-content: space-between; padding-right: 10px; }
.delta span { font-size: 14px; }

/* shelves + canvas */
.viewarea { flex: 1; display: flex; flex-direction: column; gap: 6px; padding-right: 6px; min-width: 0; }
.shelf { height: 28px; background: #fafafa; border: 1px solid #d4d4d4; display: flex; align-items: center; flex: none; }
.shelf-name { width: 125px; height: 26px; border-right: 1px solid #d4d4d4; display: flex; align-items: center; gap: 7px; padding: 0 0 1px 7px; color: #555; font-size: 11.600px; }
.shelf-pill { width: 148px; margin-left: 2px; }
.canvas { display: flex; gap: 6px; flex: none; align-items: flex-start; }
.chart { width: 824px; height: 519px; background: #f5ead9; border: 1px solid #b4b4b4; padding-left: 9px; }
.chart-title { height: 44px; width: 803px; text-align: center; padding-top: 11px; }
.chart-title span { display: inline-block; font: 700 18px/24px "DejaVu Serif", "Liberation Serif", serif; color: #f00; text-decoration: underline; transform: scaleX(1.72); letter-spacing: -.2px; -webkit-text-stroke: .4px #f00; }
.plot { width: 804px; height: 404px; display: grid; grid-template-columns: repeat(22, 1fr); justify-items: center; align-items: end; box-shadow: -1px 0 0 #fff; }
.bar { width: 27px; display: flex; flex-direction: column; }
.seg { display: flex; align-items: center; justify-content: center; padding-right: 11px; }
.seg span { writing-mode: vertical-rl; font: 700 10.800px/12px "DejaVu Sans", sans-serif; color: #fff; white-space: nowrap; }
.seg.sugar span { color: #000; }
.rice { background: #8173a7; }
.sugar { background: #c6bfee; }
.wheat { background: #c36285; }
.axis { position: relative; width: 804px; height: 59px; display: grid; grid-template-columns: repeat(22, 1fr); border-top: 1px solid #fff; }
.tick { position: relative; display: flex; justify-content: center; padding-top: 4px; }
.tick::after { content: ""; position: absolute; right: 0; top: 0; width: 1px; height: 3px; background: #fff; }
.tick span { writing-mode: vertical-rl; transform: rotate(180deg); color: #808080; font-size: 12px; line-height: 14px; height: 47px; white-space: nowrap; }
.tick.hot { background: #f5f5f5; }
.tick.hot span { color: #444; }
.hatch { position: absolute; left: 0; top: 0; }
.corner { position: absolute; width: 6px; height: 6px; border: 2px solid #a9cbe2; }
.c-bl { left: 0; bottom: 0; border-top: 0; border-right: 0; }
.c-tr { right: 0; top: 0; border-bottom: 0; border-left: 0; }
.c-br { right: 0; bottom: 0; border-top: 0; border-left: 0; }
.legend { width: 154px; height: 92px; border: 1px solid #d4d4d4; background: #fafafa; flex: none; }
.legend-head { height: 29px; padding: 6px 0 0 6px; font-size: 12px; color: #555; }
.legend-body { height: 61px; background: #f5ead9; }
.lg-row { height: 20px; display: flex; align-items: center; gap: 5px; padding-left: 3px; color: #555; font-size: 12px; }
.sw { width: 14px; height: 14px; flex: none; }

/* tabs */
.tabs { height: 30px; flex: none; display: grid; grid-template-columns: 130px 82px 45px 82px 102px 104px 104px 105px 71px 72px 69px 86px 80px 71px 67px 32px 32px 32px; background: #e6e6e6; border-top: 1px solid #d4d4d4; border-bottom: 1px solid #d4d4d4; }
.tab { display: flex; align-items: center; justify-content: center; gap: 4px; border-right: 1px solid #d4d4d4; color: #666; font-size: 11.500px; white-space: nowrap; overflow: hidden; }
.tab.first { justify-content: flex-start; padding-left: 10px; gap: 5px; }
.tab.active { background: #fafafa; color: #333; font-weight: 700; font-size: 11.500px; border-left: 1px solid #d4d4d4; }
.tab.clip { justify-content: flex-start; padding-left: 5px; }
.tab.add { padding: 0; }

/* status */
.status { height: 21px; flex: none; background: #e8e8e8; display: flex; align-items: center; font-size: 11px; color: #444; white-space: nowrap; }
.st1 { margin-left: 3px; width: 65px; }
.st2 { width: 119px; }
.st-right { margin-left: auto; display: flex; align-items: center; height: 21px; }
.st-user { width: 127px; height: 21px; border-left: 1px solid #d4d4d4; border-right: 1px solid #d4d4d4; background: #f0f0f0; display: flex; align-items: center; padding-left: 7px; gap: 9px; font-size: 11.200px; }
.st-user .caret { margin-left: 13px; }
.st-cell { width: 27px; height: 21px; border-right: 1px solid #d4d4d4; }
.st-cell.st-wide { width: 47px; }
.st-nav { width: 71px; display: flex; align-items: center; padding-left: 9px; gap: 8px; height: 21px; border-right: 1px solid #d4d4d4; }
.st-view { display: flex; align-items: center; gap: 10px; width: 68px; padding-left: 9px; }

/* taskbar */
.taskbar { height: 40px; flex: none; background: linear-gradient(90deg, #eadfd6 0%, #f0e3d6 45%, #f5e9d9 55%, #ecdcd6 75%, #e6d4d4 100%); display: flex; align-items: center; padding-left: 16px; position: relative; }
.winlogo { flex: none; }
.tsearch { width: 288px; height: 39px; margin: 1px 0 0 16px; background: #fff; border: 1px solid #d8d8d8; border-bottom: 0; display: flex; align-items: center; padding: 0 0 2px 13px; gap: 9px; font-size: 14px; color: #222; position: relative; overflow: hidden; }
.rhino { position: absolute; left: 206px; top: -1px; }
.taskview { margin-left: 17px; flex: none; }
.ticon { width: 46px; height: 40px; display: flex; align-items: center; justify-content: center; flex: none; position: relative; margin-left: 3px; }
.ticon.run::after, .ticon.act::after { content: ""; position: absolute; left: 3px; right: 3px; bottom: 0; height: 3px; background: #0078d7; }
.taskview + .ticon { margin-left: 19px; }
.ticon.act { background: #f7f0ea; margin-left: 4px; }
.ticon.act::after { left: 0; right: 0; }
.tlogo-big { stroke: #5a9dbf; }
.tray { position: absolute; right: 16px; left: 918px; top: 0; height: 40px; display: flex; align-items: center; font-size: 13px; color: #111; white-space: nowrap; }
.weather { display: flex; align-items: center; width: 174px; flex: none; gap: 9px; }
.temp { margin-left: -2px; }
.badge1 { font: 700 9.500px "Open Sans", sans-serif; fill: #fff; text-anchor: middle; }
.tray > svg { flex: none; margin-right: 12px; }
.tray > .chev { margin-right: 10px; }
.tray > .wifi { margin-right: 7px; }
.tray > .vol { margin-right: 11px; }
.lang { font-size: 12px; width: 34px; }
.clock { display: flex; flex-direction: column; align-items: center; font-size: 12px; line-height: 18px; width: 66px; padding-top: 2px; }
.notif { position: relative; margin-left: 12px; width: 26px; height: 26px; }
.nbadge { position: absolute; right: 0; bottom: 0; width: 16px; height: 16px; border-radius: 50%; border: 1px solid #444; background: #e5d8d6; font-size: 10px; line-height: 14px; text-align: center; }

/* watermark */
.activate { position: absolute; left: 1073px; top: 651px; pointer-events: none; color: rgba(120,120,120,.45); white-space: nowrap; }
.a1 { font-size: 19px; line-height: 20px; }
.a2 { font-size: 14.200px; line-height: 18px; margin-top: 5px; }
```
